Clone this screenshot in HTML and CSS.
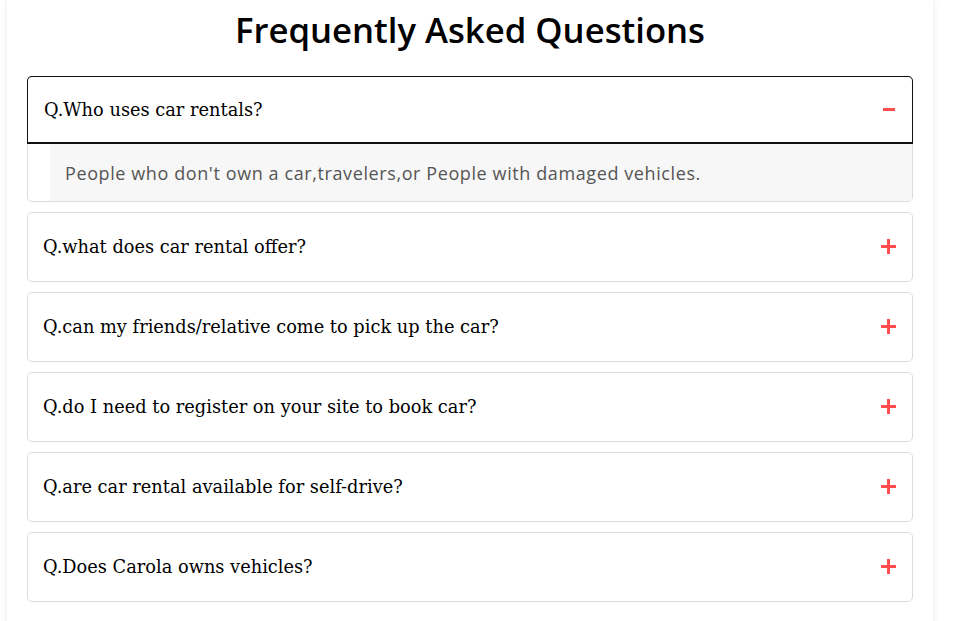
FILE: index.html
```html
<!DOCTYPE html>
<html lang="en">
<head>
<meta charset="utf-8">
<title>FAQ</title>
<link rel="stylesheet" href="styles.css">
</head>
<body>
<section class="panel">
  <h1 class="title">Frequently Asked Questions</h1>
  <div class="faq">
    <div class="item open">
      <div class="q">
        <span>Q.Who uses car rentals?</span>
        <span class="icon minus"></span>
      </div>
      <div class="a"><p>People who don't own a car,travelers,or People with damaged vehicles.</p></div>
    </div>
    <div class="item">
      <div class="q"><span>Q.what does car rental offer?</span><span class="icon plus"></span></div>
    </div>
    <div class="item">
      <div class="q"><span>Q.can my friends/relative come to pick up the car?</span><span class="icon plus"></span></div>
    </div>
    <div class="item">
      <div class="q"><span>Q.do I need to register on your site to book car?</span><span class="icon plus"></span></div>
    </div>
    <div class="item">
      <div class="q"><span>Q.are car rental available for self-drive?</span><span class="icon plus"></span></div>
    </div>
    <div class="item">
      <div class="q"><span>Q.Does Carola owns vehicles?</span><span class="icon plus"></span></div>
    </div>
  </div>
</section>
</body>
</html>
```
FILE: styles.css
```css
* { box-sizing: border-box; }
html, body { margin: 0; padding: 0; background: #fff; }
.panel {
  margin-left: 7px;
  width: 926px;
  min-height: 640px;
  background: #fff;
  box-shadow: 0 0 7px rgba(0,0,0,0.09);
  padding: 8px 20px 20px 20px;
}
.title {
  margin: 0;
  text-align: center;
  font-family: "Open Sans", sans-serif;
  font-weight: 600;
  font-size: 34.7px;
  line-height: 44px;
  color: #000;
}
.faq {
  margin-top: 24px;
  display: flex;
  flex-direction: column;
  gap: 10px;
}
.item {
  border: 1px solid #dcdcdc;
  border-radius: 5px;
}
.q {
  height: 68px;
  display: flex;
  align-items: center;
  justify-content: space-between;
  padding: 0 16px 2px 15px;
  font-family: "DejaVu Serif", serif;
  font-size: 17.8px;
  color: #000;
}
.q .icon { margin-top: 1px; }
.item.open .q {
  border: 1px solid #111;
  border-bottom-width: 2px;
  border-radius: 5px 5px 0 0;
  margin: -1px -1px 0 -1px;
  padding-left: 16px;
  padding-right: 17px;
  padding-bottom: 1px;
}
.icon { position: relative; width: 15px; height: 15px; }
.icon::before, .icon::after {
  content: "";
  position: absolute;
  background: #ff4d4d;
}
.icon::before { left: 0; top: 6px; width: 15px; height: 3px; }
.plus::after { left: 6px; top: 0; width: 3px; height: 15px; }
.minus { width: 12px; }
.minus::before { width: 12px; }
.a {
  margin-left: 22px;
  background: #f7f7f7;
  height: 57px;
  display: flex;
  align-items: center;
  padding-left: 15px;
  border-bottom-right-radius: 4px;
}
.a p {
  margin: 0;
  font-family: "Open Sans", sans-serif;
  font-size: 18px;
  letter-spacing: 0.6px;
  color: #555;
}
```
